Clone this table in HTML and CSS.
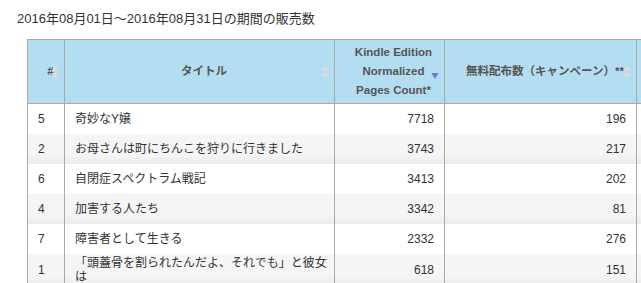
FILE: index.html
```
<!DOCTYPE html>
<html lang="ja">
<head>
<meta charset="utf-8">
<title>販売数</title>
<link rel="stylesheet" href="styles.css">
</head>
<body>
<div class="page">
  <p class="period">2016年08月01日～2016年08月31日の期間の販売数</p>
  <table class="sales">
    <colgroup>
      <col class="c-num"><col class="c-title"><col class="c-kenp"><col class="c-free"><col class="c-extra">
    </colgroup>
    <thead>
      <tr>
        <th class="th-num">#<svg class="sort" width="8" height="16" viewBox="0 0 8 16"><path d="M4 1L7.5 7H0.5Z" class="tri"/><path d="M0.5 9H7.5L4 15Z" class="tri"/></svg></th>
        <th class="th-title">タイトル<svg class="sort" width="8" height="16" viewBox="0 0 8 16"><path d="M4 1L7.5 7H0.5Z" class="tri"/><path d="M0.5 9H7.5L4 15Z" class="tri"/></svg></th>
        <th class="th-kenp">Kindle Edition Normalized Pages Count*<svg class="sort" width="8" height="16" viewBox="0 0 8 16"><path d="M0.5 9H7.5L4 15Z" class="tri-on"/></svg></th>
        <th class="th-free">無料配布数（キャンペーン）**<svg class="sort" width="8" height="16" viewBox="0 0 8 16"><path d="M4 1L7.5 7H0.5Z" class="tri"/><path d="M0.5 9H7.5L4 15Z" class="tri"/></svg></th>
        <th class="th-extra"></th>
      </tr>
    </thead>
    <tbody>
      <tr><td class="num">5</td><td class="title">奇妙なY嬢</td><td class="val">7718</td><td class="val">196</td><td></td></tr>
      <tr class="alt"><td class="num">2</td><td class="title">お母さんは町にちんこを狩りに行きました</td><td class="val">3743</td><td class="val">217</td><td></td></tr>
      <tr><td class="num">6</td><td class="title">自閉症スペクトラム戦記</td><td class="val">3413</td><td class="val">202</td><td></td></tr>
      <tr class="alt"><td class="num">4</td><td class="title">加害する人たち</td><td class="val">3342</td><td class="val">81</td><td></td></tr>
      <tr><td class="num">7</td><td class="title">障害者として生きる</td><td class="val">2332</td><td class="val">276</td><td></td></tr>
      <tr class="alt"><td class="num">1</td><td class="title">「頭蓋骨を割られたんだよ、それでも」と彼女は</td><td class="val">618</td><td class="val">151</td><td></td></tr>
    </tbody>
  </table>
</div>
</body>
</html>
```
FILE: styles.css
```
html, body {
  margin: 0;
  padding: 0;
  background: #fff;
  overflow: hidden;
}
.page {
  font-family: "Liberation Sans", "Noto Sans CJK JP", sans-serif;
  color: #333;
  width: 641px;
  height: 283px;
  overflow: hidden;
}
.period {
  margin: 0;
  padding: 11px 0 0 17px;
  font-size: 13px;
  line-height: 16px;
  color: #333;
}
.sales {
  margin: 12px 0 0 27px;
  border-collapse: collapse;
  table-layout: fixed;
  width: 669px;
  font-size: 12px;
}
.c-num { width: 37px; }
.c-title { width: 270px; }
.c-kenp { width: 110px; }
.c-free { width: 192px; }
.c-extra { width: 60px; }
.sales th, .sales td {
  border-left: 1px solid #a9a9a9;
  border-right: 1px solid #a9a9a9;
}
.sales th {
  position: relative;
  height: 63px;
  padding: 0 0 0 9px;
  background: #b3def1;
  color: #555;
  font-weight: bold;
  font-size: 11.5px;
  line-height: 19px;
  text-align: center;
  border-top: 1px solid #a9a9a9;
  border-bottom: 1px solid #a9a9a9;
}
.sales th.th-kenp {
  padding: 0 4px 0 12px;
}
.sort {
  position: absolute;
  right: 5px;
  top: 50%;
  margin-top: -8px;
  display: block;
}
.tri { fill: #dcdcdc; }
.tri-on { fill: #7474d6; }
.sales td {
  height: 26px;
  padding: 2px 5px 2px 10px;
  line-height: 14px;
  vertical-align: middle;
  color: #333;
}
.sales td.val {
  text-align: right;
  padding-right: 10px;
}
.sales tr.alt td {
  background: linear-gradient(#f5f5f5, #f5f5f5 70%, #ebebeb);
}
```
